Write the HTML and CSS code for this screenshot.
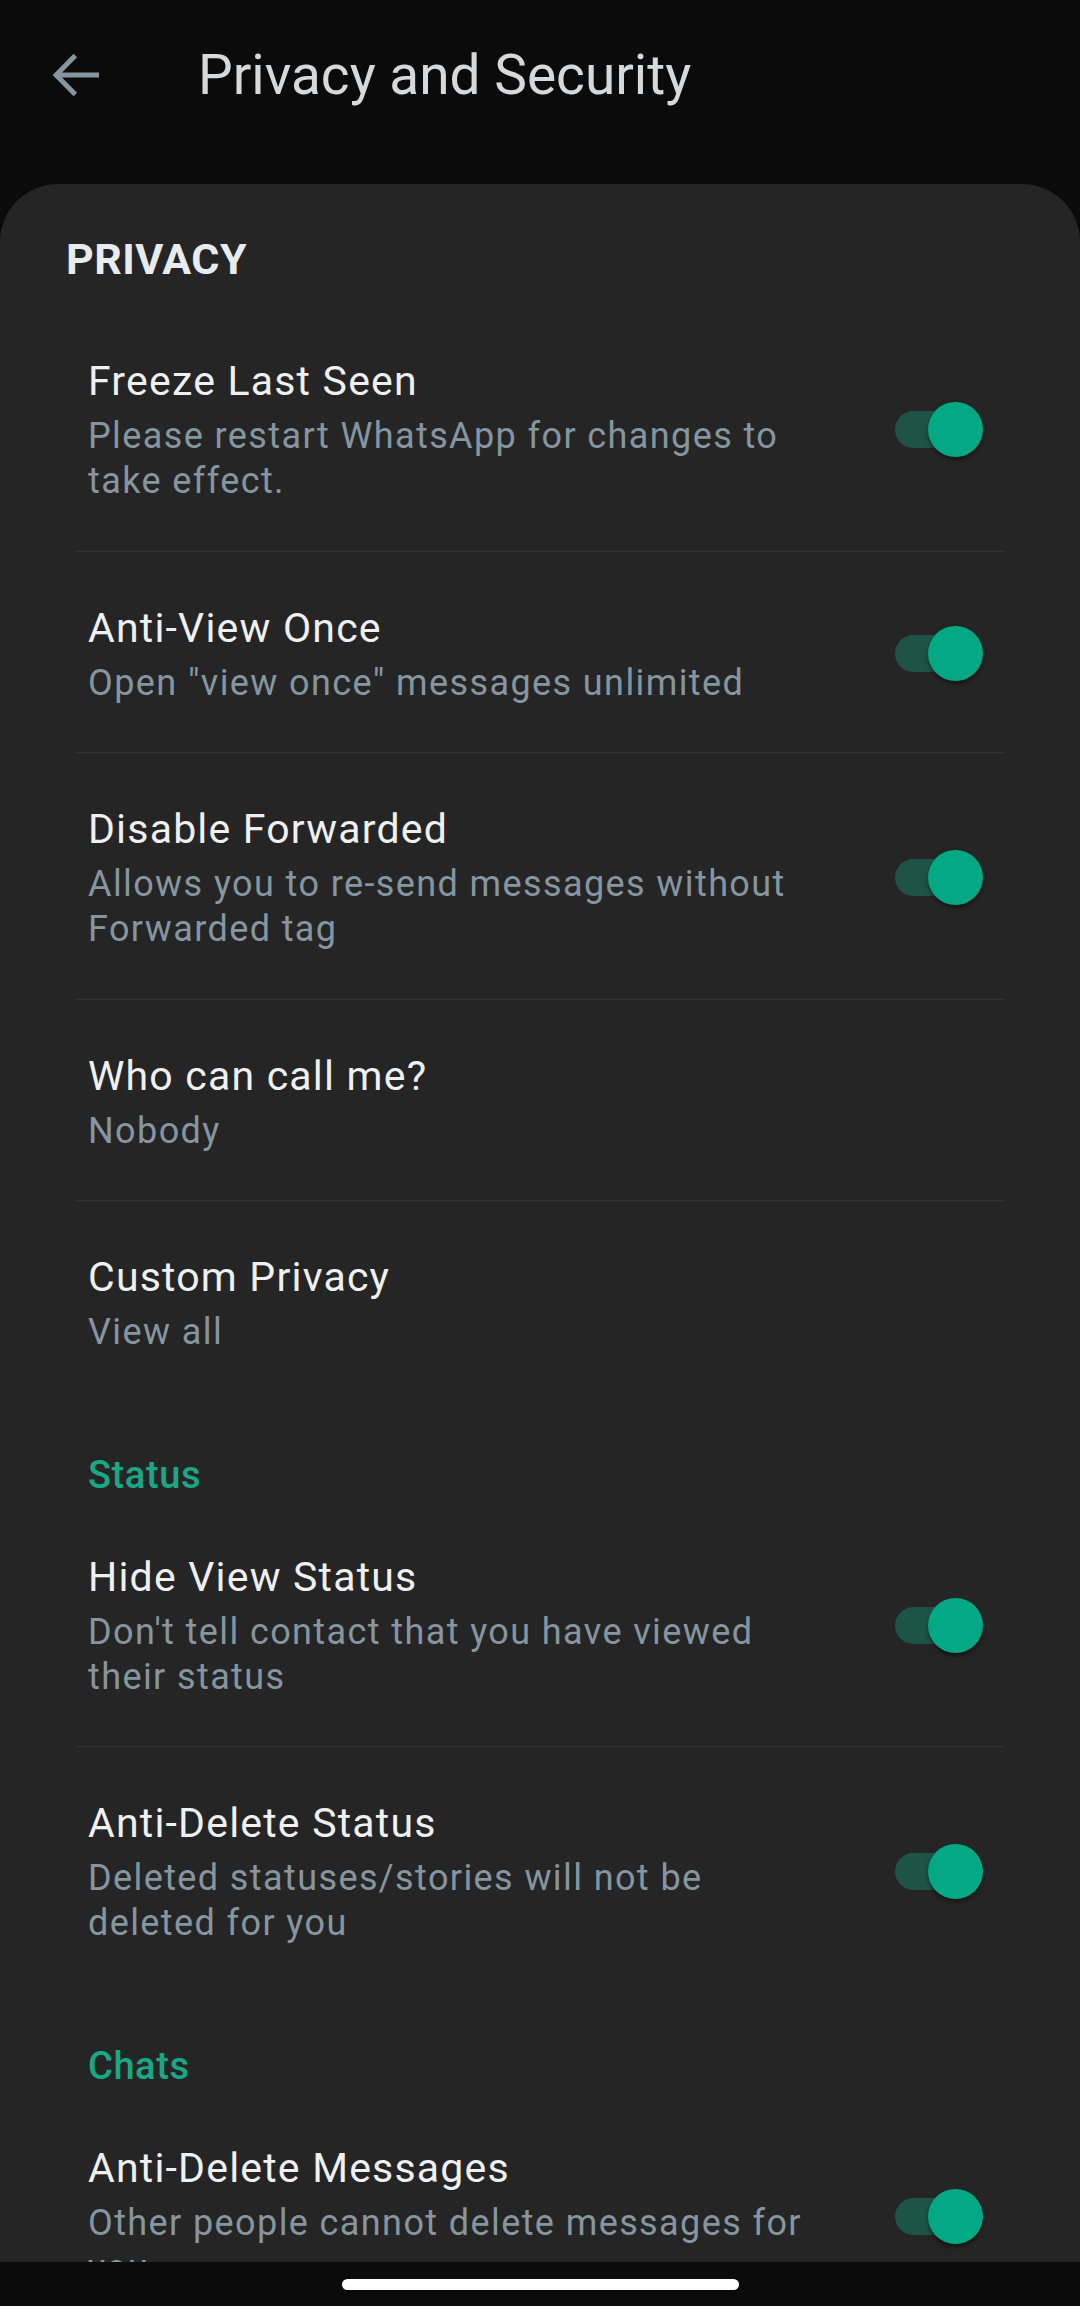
FILE: index.html
```html
<!DOCTYPE html>
<html lang="en">
<head>
    <meta charset="UTF-8">
    <meta name="viewport" content="width=device-width, initial-scale=1.0">
    <title>Privacy and Security</title>
    <link rel="stylesheet" href="styles.css">
</head>
<body>
    <div class="topbar">
        <svg class="back-btn" viewBox="0 0 24 24" width="66" height="66">
            <path d="M20 12H4.6M11.4 4.9 4.4 12l7 7.1" fill="none" stroke="#8696a0" stroke-width="1.8"/>
        </svg>
        <h1 class="page-title">Privacy and Security</h1>
    </div>

    <div class="card">
        <h2 class="group-title">PRIVACY</h2>
        <ul class="list">
            <li class="item">
                <div class="item-text">
                    <div class="item-title">Freeze Last Seen</div>
                    <div class="item-sub">Please restart WhatsApp for changes to take effect.</div>
                </div>
                <span class="switch"></span>
            </li>
            <li class="item">
                <div class="item-text">
                    <div class="item-title">Anti-View Once</div>
                    <div class="item-sub">Open "view once" messages unlimited</div>
                </div>
                <span class="switch"></span>
            </li>
            <li class="item">
                <div class="item-text">
                    <div class="item-title">Disable Forwarded</div>
                    <div class="item-sub">Allows you to re-send messages without Forwarded tag</div>
                </div>
                <span class="switch"></span>
            </li>
            <li class="item">
                <div class="item-text">
                    <div class="item-title">Who can call me?</div>
                    <div class="item-sub">Nobody</div>
                </div>
            </li>
            <li class="item">
                <div class="item-text">
                    <div class="item-title">Custom Privacy</div>
                    <div class="item-sub">View all</div>
                </div>
            </li>
        </ul>

        <h3 class="section-title">Status</h3>
        <ul class="list">
            <li class="item">
                <div class="item-text">
                    <div class="item-title">Hide View Status</div>
                    <div class="item-sub">Don't tell contact that you have viewed their status</div>
                </div>
                <span class="switch"></span>
            </li>
            <li class="item">
                <div class="item-text">
                    <div class="item-title">Anti-Delete Status</div>
                    <div class="item-sub">Deleted statuses/stories will not be deleted for you</div>
                </div>
                <span class="switch"></span>
            </li>
        </ul>

        <h3 class="section-title">Chats</h3>
        <ul class="list">
            <li class="item">
                <div class="item-text">
                    <div class="item-title">Anti-Delete Messages</div>
                    <div class="item-sub">Other people cannot delete messages for you</div>
                </div>
                <span class="switch"></span>
            </li>
        </ul>
    </div>

    <div class="navbar">
        <span class="home-pill"></span>
    </div>
</body>
</html>
```

FILE: styles.css
```css
body {
    font-family: Roboto, "Noto Sans", sans-serif;
    background-color: #0b0b0b;
    margin: 0;
    padding: 0;
    height: 2306px;
    display: flex;
    flex-direction: column;
    overflow: hidden;
}
.topbar {
    height: 150px;
    display: flex;
    align-items: center;
    padding-left: 44px;
    flex-shrink: 0;
}
.back-btn {
    display: block;
}
.page-title {
    margin: 0 0 0 88px;
    font-size: 55px;
    font-weight: 400;
    color: #d6d9db;
    line-height: 66px;
}
.card {
    flex: 1;
    margin-top: 34px;
    background-color: #252525;
    border-radius: 58px 58px 0 0;
    padding-top: 49px;
    overflow: hidden;
}
.group-title {
    margin: 0 0 20px 66px;
    font-size: 43px;
    font-weight: 700;
    line-height: 52px;
    letter-spacing: 0.5px;
    color: #e9ecee;
}
.section-title {
    margin: 51px 0 3px 88px;
    font-size: 38px;
    font-weight: 500;
    line-height: 45px;
    letter-spacing: 0.6px;
    color: #18a886;
}
.list {
    list-style-type: none;
    margin: 0 77px;
    padding: 0;
}
.item {
    display: flex;
    align-items: center;
    padding: 50px 20px 46.5px 11px;
}
.item:not(:last-child) {
    border-bottom: 1px solid #343434;
}
.item-text {
    flex: 1;
    padding-right: 62px;
}
.item-title {
    font-size: 41px;
    line-height: 52px;
    letter-spacing: 1.2px;
    color: #eef0f1;
}
.item-sub {
    margin-top: 7px;
    font-size: 36px;
    line-height: 45px;
    letter-spacing: 1.4px;
    color: #8696a0;
}
.switch {
    position: relative;
    width: 88px;
    height: 55px;
    flex-shrink: 0;
}
.switch::before {
    content: "";
    position: absolute;
    left: 0;
    top: 9px;
    width: 80px;
    height: 37px;
    border-radius: 19px;
    background-color: #1e5446;
}
.switch::after {
    content: "";
    position: absolute;
    right: 0;
    top: 0;
    width: 55px;
    height: 55px;
    border-radius: 50%;
    background-color: #03a884;
    box-shadow: 0 3px 4px rgba(0, 0, 0, 0.45);
}
.navbar {
    height: 44px;
    flex-shrink: 0;
    background-color: #0b0b0b;
    display: flex;
    justify-content: center;
    padding-top: 17px;
    box-sizing: border-box;
}
.home-pill {
    width: 397px;
    height: 11px;
    border-radius: 6px;
    background-color: #fff;
}
```
